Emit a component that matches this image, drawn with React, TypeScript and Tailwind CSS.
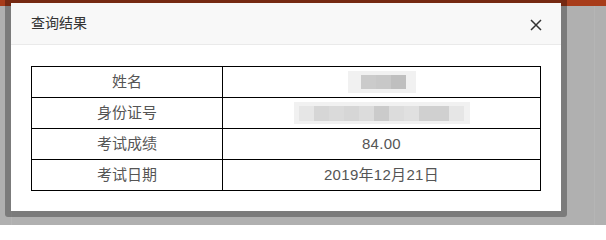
import React from "react";

const rows: { label: string; value: React.ReactNode }[] = [
  { label: "姓名", value: <NameBlur /> },
  { label: "身份证号", value: <IdBlur /> },
  { label: "考试成绩", value: "84.00" },
  { label: "考试日期", value: "2019年12月21日" },
];

function NameBlur() {
  return (
    <div className="mx-auto flex h-[22px] w-[68px] items-center justify-center bg-[#f1f1f1] blur-[0.5px]">
      <span className="ml-[4px] h-[14px] w-[15px] bg-[#cbcbcb]" />
      <span className="h-[14px] w-[15px] bg-[#c8c8c8]" />
      <span className="h-[14px] w-[15px] bg-[#bfbfbf]" />
    </div>
  );
}

function IdBlur() {
  const shades = ["#e6e6e6", "#d6d6d6", "#dadada", "#d6d6d6", "#dcdcdc", "#cbcbcb", "#dcdcdc", "#e0e0e0", "#d0d0d0", "#d0d0d0", "#e6e6e6"];
  return (
    <div className="mx-auto flex h-[22px] w-[176px] items-center justify-center bg-[#f1f1f1] blur-[0.5px]">
      {shades.map((c, i) => (
        <span key={i} className="h-[15px] w-[15px]" style={{ backgroundColor: c }} />
      ))}
    </div>
  );
}

export default function App() {
  return (
    <div
      className="relative h-[225px] w-[606px] overflow-hidden bg-[#b0b0b0]"
      style={{ fontFamily: '"Liberation Sans", "Noto Sans CJK SC", sans-serif' }}
    >
      {/* page behind the overlay */}
      <div className="h-[6px] w-full bg-[#a83c1a]" />
      <div className="mx-[11px] h-full border-x border-[#b5b5b5]" />

      {/* dialog */}
      <div className="absolute left-[5px] top-[-3px] w-[562px] rounded-[3px] bg-black/30 p-[6px]">
        <div className="bg-white">
          <div className="flex h-[42px] items-center justify-between border-b border-[#eaeaea] bg-[#f8f8f8] pl-[20px] pr-[19px]">
            <span className="text-[14px] text-[#333]">查询结果</span>
            <svg width="12" height="12" viewBox="0 0 12 12" className="mt-[2px]">
              <path d="M1 1L11 11M11 1L1 11" stroke="#333" strokeWidth="1.5" />
            </svg>
          </div>
          <div className="px-[20px] pb-[20px] pt-[21px]">
            <table className="w-[510px] border-collapse border border-black text-[15px] text-[#555]">
              <tbody>
                {rows.map((r) => (
                  <tr key={r.label}>
                    <td className="h-[30px] w-[191px] border border-black p-0 text-center leading-[30px]">{r.label}</td>
                    <td className="h-[30px] border border-black p-0 text-center leading-[30px] tracking-[0.3px]">{r.value}</td>
                  </tr>
                ))}
              </tbody>
            </table>
          </div>
        </div>
      </div>
    </div>
  );
}
